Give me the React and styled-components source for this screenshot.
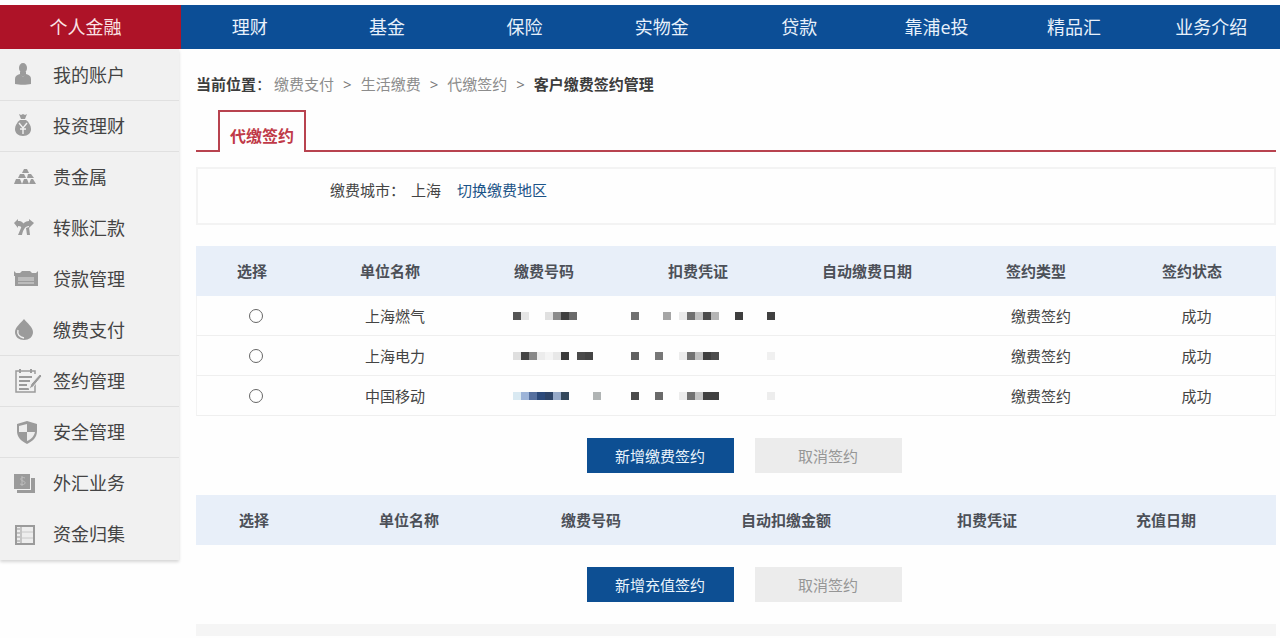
import React, { useState } from 'react';
import styled, { createGlobalStyle } from 'styled-components';

const GlobalStyle = createGlobalStyle`
    body {
        margin: 0;
        background: #fefefe;
        color: #444;
        font-family: "Open Sans", "Noto Sans CJK SC", sans-serif;
        font-size: 15px;
        line-height: 22px;
    }

    *, *::before, *::after {
        box-sizing: border-box;
    }
`;

const sections = ['理财', '基金', '保险', '实物金', '贷款', '靠浦e投', '精品汇', '业务介绍'];

const icons = {
    account: (
        <>
            <ellipse cx="10" cy="8" rx="4" ry="5" />
            <path d="M7 12h6v3l-3 2-3-2z" />
            <path d="M2 24v-5c0-3 2-4 5-5l3 3 3-3c3 1 5 2 5 5v5c-4 1-12 1-16 0z" />
        </>
    ),
    invest: (
        <>
            <path d="M6 3l2 1 2-1 2 1 2-1-2 5H8z" />
            <path d="M7 9h6c3 2 5 6 5 9 0 4-3 7-8 7s-8-3-8-7c0-3 2-7 5-9z" />
            <path d="M6 12l4 5 4-5M10 17v6M7 18h6" fill="none" stroke="#f1f1f1" strokeWidth="1.4" />
        </>
    ),
    metal: (
        <>
            <path d="M11 7h3l2 4H9z" />
            <path d="M7 12h4l2 4H5zM15 12h3l3 4h-7z" />
            <path d="M3 17h4l2 5H1zM11 17h3l2 5h-7zM18 17h2l3 5h-7z" />
        </>
    ),
    transfer: (
        <>
            <path d="M1 10l4-4v2c4 0 6 2 6 5l-1 4c-1-3-2-4-5-4v2z" />
            <path d="M21 10l-5-4v2c-4 0-7 3-8 7l-3 7h4c1-5 3-9 7-9v2z" />
            <path d="M13 15l3-1 1 8h-3z" />
        </>
    ),
    loan: (
        <>
            <path d="M1 7l2 2h4l2-2h8l2 2h4l2-2v5H1z" />
            <path d="M2 12h23v10H2z" />
            <path d="M5 14h16M5 16h16M5 19h16" stroke="#ddd" strokeWidth="1" />
        </>
    ),
    payment: (
        <>
            <path d="M11 4c3 4 9 8 9 13 0 5-4 8-9 8s-9-3-9-8c0-5 6-9 9-13z" />
            <path d="M5 15c-1 4 1 7 6 8" fill="none" stroke="#f1f1f1" strokeWidth="1.4" />
        </>
    ),
    contract: (
        <>
            <path d="M22 16v10H3V5h19v3" fill="none" stroke="currentColor" strokeWidth="1.5" />
            <path d="M7 3v4M18 3v4" stroke="currentColor" strokeWidth="2" />
            <path d="M6 11h13M6 15h11M6 19h8M6 23h10" stroke="currentColor" strokeWidth="2" />
            <path d="M27 8l2 2-9 11-4 2 2-5z" stroke="#f1f1f1" strokeWidth="1" />
        </>
    ),
    security: (
        <>
            <path d="M14 4l10 3v7c0 6-4 10-10 13C8 24 4 20 4 14V7z" />
            <path d="M14 7v8H6V9zM14 15h8c-1 4-3 7-8 9z" fill="#ededed" />
        </>
    ),
    forex: (
        <>
            <path d="M1 6h16v15H1z" />
            <path d="M18 10h4v15H4v-3h14z" />
            <path d="M12 10c-4-2-6 2-2 3 4 1 2 5-3 3M9 8v10" fill="none" stroke="#bdbdbd" strokeWidth="1" />
        </>
    ),
    collect: (
        <>
            <path d="M3 7h18v18H3z" fill="#ededed" stroke="currentColor" strokeWidth="2" />
            <path d="M8 7v18" stroke="currentColor" strokeWidth="1" />
            <path d="M9 13h11M9 19h11" stroke="#c8c8c8" strokeWidth="1" />
            <path d="M4 10h3M4 14h3M4 18h3M4 22h3" stroke="currentColor" strokeWidth="1" />
        </>
    )
};

const menu = [
    { icon: 'account', label: '我的账户', divider: true },
    { icon: 'invest', label: '投资理财', divider: true },
    { icon: 'metal', label: '贵金属' },
    { icon: 'transfer', label: '转账汇款' },
    { icon: 'loan', label: '贷款管理' },
    { icon: 'payment', label: '缴费支付', divider: true },
    { icon: 'contract', label: '签约管理', divider: true },
    { icon: 'security', label: '安全管理', divider: true },
    { icon: 'forex', label: '外汇业务' },
    { icon: 'collect', label: '资金归集' }
];

const paymentColumns = [
    ['选择', 122],
    ['单位名称', 154],
    ['缴费号码', 154],
    ['扣费凭证', 154],
    ['自动缴费日期', 184],
    ['签约类型', 154],
    ['签约状态', 158]
];

const rechargeColumns = [
    ['选择', 126],
    ['单位名称', 184],
    ['缴费号码', 180],
    ['自动扣缴金额', 210],
    ['扣费凭证', 192],
    ['充值日期', 166],
    ['', 22]
];

// Masked numbers: [cell index, colour], one cell is 8px wide
const contracts = [
    {
        name: '上海燃气',
        number: [[2, '#555'], [3, '#e6e6e6'], [6, '#e0e0e0'], [7, '#8a8a8a'], [8, '#404040'], [9, '#6a6a6a']],
        voucher: [[0, '#707070'], [4, '#a5a5a5'], [6, '#eaeaea'], [7, '#707070'], [8, '#c0c0c0'], [9, '#4a4a4a'],
            [10, '#b5b5b5'], [13, '#3e3e3e'], [17, '#404040']]
    },
    {
        name: '上海电力',
        number: [[2, '#dfdfdf'], [3, '#444'], [4, '#888'], [5, '#ececec'], [6, '#f4f4f4'], [7, '#e8e8e8'],
            [8, '#3a3a3a'], [10, '#4a4a4a'], [11, '#444']],
        voucher: [[0, '#606060'], [3, '#777'], [6, '#ececec'], [7, '#727272'], [8, '#c0c0c0'], [9, '#3e3e3e'],
            [10, '#4c4c4c'], [17, '#f0f0f0']]
    },
    {
        name: '中国移动',
        number: [[2, '#d9e9f2'], [3, '#9db4d8'], [4, '#56709f'], [5, '#2c4a7a'], [6, '#2d4468'], [7, '#96a9c8'],
            [8, '#34485c'], [12, '#b0b4b4']],
        voucher: [[0, '#4a4a4a'], [3, '#6a6a6a'], [6, '#ececec'], [7, '#727272'], [8, '#c4c4c4'], [9, '#404040'],
            [10, '#404040'], [17, '#ededed']]
    }
];

const Mask = ({ cells, length }) => (
    <MaskImage width={length * 8} height="8" aria-hidden="true" shapeRendering="crispEdges">
        {cells.map(([index, color]) => (
            <rect key={index} x={index * 8} y="0" width="8" height="8" fill={color} />
        ))}
    </MaskImage>
);

const TableHead = ({ columns }) => (
    <>
        <colgroup>
            {columns.map(([label, width]) => <col key={label} width={width} />)}
        </colgroup>
        <thead>
            <tr>
                {columns.map(([label]) => (
                    label ? <HeadCell key={label} scope="col">{label}</HeadCell> : <EmptyHeadCell key="empty" />
                ))}
            </tr>
        </thead>
    </>
);

const App = () => {
    const [selected, setSelected] = useState(null);

    return (
        <Page>
            <GlobalStyle />
            <TopNav>
                <ActiveSection href="#personal">个人金融</ActiveSection>
                {sections.map(label => <Section key={label} href="#section">{label}</Section>)}
            </TopNav>
            <Body>
                <Sidebar>
                    {menu.map(({ icon, label, divider }) => (
                        <MenuItem key={icon} href={`#${icon}`} $divider={divider}>
                            <MenuIcon viewBox="0 0 30 30" aria-hidden="true">{icons[icon]}</MenuIcon>
                            {label}
                        </MenuItem>
                    ))}
                </Sidebar>
                <Main>
                    <Breadcrumb>
                        <Strong>当前位置</Strong>
                        <Colon>：</Colon>
                        <Crumb href="#payment">缴费支付</Crumb>
                        <Separator>&gt;</Separator>
                        <Crumb href="#life">生活缴费</Crumb>
                        <Separator>&gt;</Separator>
                        <Crumb href="#sign">代缴签约</Crumb>
                        <Separator>&gt;</Separator>
                        <Strong>客户缴费签约管理</Strong>
                    </Breadcrumb>
                    <Tabs>
                        <Tab type="button">代缴签约</Tab>
                    </Tabs>
                    <CityPanel>
                        <span>缴费城市：</span>
                        <span>上海</span>
                        <CityLink href="#city">切换缴费地区</CityLink>
                    </CityPanel>
                    <Table>
                        <TableHead columns={paymentColumns} />
                        <tbody>
                            {contracts.map(({ name, number, voucher }) => (
                                <tr key={name}>
                                    <Cell>
                                        <Radio
                                            name="contract"
                                            aria-label={name}
                                            checked={selected === name}
                                            onChange={() => setSelected(name)}
                                        />
                                    </Cell>
                                    <Cell>{name}</Cell>
                                    <Cell><Mask cells={number} length={13} /></Cell>
                                    <Cell><Mask cells={voucher} length={18} /></Cell>
                                    <Cell />
                                    <Cell>缴费签约</Cell>
                                    <Cell>成功</Cell>
                                </tr>
                            ))}
                        </tbody>
                    </Table>
                    <Actions>
                        <Button type="button">新增缴费签约</Button>
                        <CancelButton type="button" disabled>取消签约</CancelButton>
                    </Actions>
                    <Table>
                        <TableHead columns={rechargeColumns} />
                    </Table>
                    <Actions>
                        <Button type="button">新增充值签约</Button>
                        <CancelButton type="button" disabled>取消签约</CancelButton>
                    </Actions>
                    <Footer />
                </Main>
            </Body>
        </Page>
    );
};

const Page = styled.div`
    padding-top: 5px;
`;

const TopNav = styled.nav`
    display: flex;
    height: 44px;
    background: #0c4e96;
`;

const Section = styled.a`
    flex: 1;
    display: flex;
    align-items: center;
    justify-content: center;
    color: #e8f1fb;
    font-size: 18px;
    text-decoration: none;
    white-space: nowrap;
`;

const ActiveSection = styled(Section)`
    flex: 0 0 181px;
    padding-right: 10px;
    background: #ae1328;
    color: #fbe3e5;
`;

const Body = styled.div`
    display: flex;
    align-items: flex-start;
`;

const Sidebar = styled.nav`
    flex: 0 0 179px;
    padding-top: 1px;
    background: #f1f1f1;
    box-shadow: 0 2px 3px rgba(0, 0, 0, 0.16);
`;

const MenuItem = styled.a`
    display: flex;
    align-items: center;
    gap: 10px;
    height: 51px;
    padding-left: 13px;
    border-bottom: 1px solid ${({ $divider }) => ($divider ? '#e0e0e0' : 'transparent')};
    color: #444;
    font-size: 18px;
    text-decoration: none;
`;

const MenuIcon = styled.svg`
    width: 30px;
    height: 30px;
    color: #9b9b9b;
    fill: currentColor;
`;

const Main = styled.main`
    flex: 1;
    min-width: 0;
    padding: 24px 4px 0 17px;
`;

const Breadcrumb = styled.div`
    display: flex;
    white-space: nowrap;
`;

const Strong = styled.strong`
    color: #3c3c3c;
`;

const Colon = styled.span`
    margin-right: 3px;
`;

const Crumb = styled.a`
    color: #8c8c8c;
    text-decoration: none;
`;

const Separator = styled.span`
    padding: 0 9px;
    color: #777;
`;

const Tabs = styled.div`
    display: flex;
    margin-top: 15px;
    padding-left: 22px;
    border-bottom: 2px solid #b8434f;
`;

const Tab = styled.button`
    height: 42px;
    margin-bottom: -2px;
    padding: 5px 10px 0;
    border: 2px solid #b8434f;
    border-bottom: 0;
    background: #fefefe;
    color: #c03a48;
    font-family: inherit;
    font-size: 16px;
    font-weight: bold;
`;

const CityPanel = styled.div`
    display: flex;
    gap: 6px;
    height: 58px;
    margin: 15px 0 21px;
    padding: 10px 0 0 132px;
    border: 2px solid #f3f3f3;
`;

const CityLink = styled.a`
    margin-left: 10px;
    color: #1c5488;
    text-decoration: none;
`;

const Table = styled.table`
    width: 100%;
    table-layout: fixed;
    border-collapse: separate;
    border-spacing: 0;
`;

const HeadCell = styled.th`
    height: 50px;
    padding: 0 10px 0 0;
    background: #e8eff9;
    color: #4c5058;
    font-weight: bold;
`;

const EmptyHeadCell = styled.td`
    padding: 0;
    background: #e8eff9;
`;

const Cell = styled.td`
    height: 40px;
    padding: 0;
    border-bottom: 1px solid #efefef;
    text-align: center;

    &:first-child {
        padding-right: 4px;
        border-left: 1px solid #f3f3f3;
    }

    &:last-child {
        border-right: 1px solid #f3f3f3;
    }
`;

const Radio = styled.input.attrs({ type: 'radio' })`
    display: block;
    width: 14px;
    height: 14px;
    margin: 0 auto;
    appearance: none;
    border: 1px solid #666;
    border-radius: 50%;
    background: #fff;

    &:checked {
        border: 4px solid #0c4e96;
    }
`;

const MaskImage = styled.svg`
    display: block;
    margin: 0 auto;
`;

const Actions = styled.div`
    display: flex;
    justify-content: center;
    gap: 21px;
    padding: 22px 0 22px 16px;
`;

const Button = styled.button`
    width: 147px;
    height: 35px;
    padding: 0;
    border: 0;
    background: #0d4f93;
    color: #eaf4fc;
    font-family: inherit;
    font-size: 15px;
`;

const CancelButton = styled(Button)`
    background: #ececec;
    color: #969696;
`;

const Footer = styled.footer`
    height: 12px;
    background: #f5f5f5;
`;

export default App;
